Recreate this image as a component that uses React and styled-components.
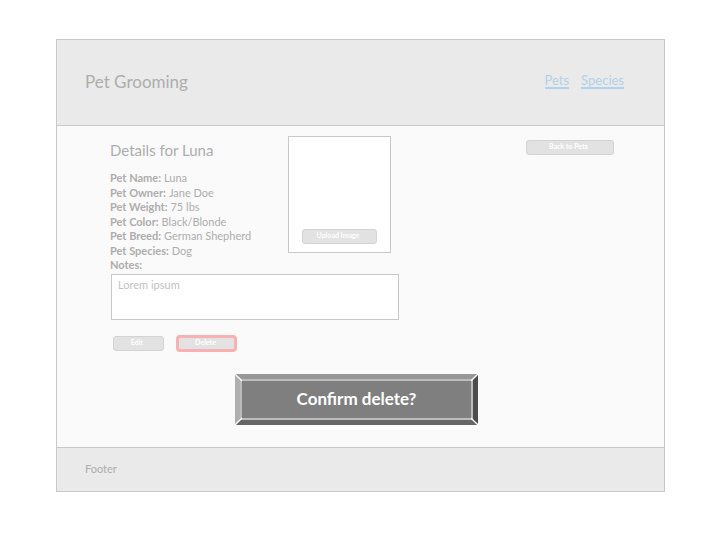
import React from "react";
import styled, { createGlobalStyle } from "styled-components";

const GlobalStyle = createGlobalStyle`
  * { box-sizing: border-box; }
  body {
    margin: 0;
    background: #ffffff;
    font-family: Lato, "Liberation Sans", sans-serif;
    color: #adadad;
  }
  h1, h2, dl, dd { margin: 0; font-weight: 400; }
`;

const Page = styled.div`
  min-height: 100vh;
  padding: 39px 55px 48px 56px;
  display: flex;
`;

const Frame = styled.div`
  flex: 1;
  display: flex;
  flex-direction: column;
  border: 1px solid #c9c9c9;
  background: #fafafa;
`;

const Header = styled.header`
  display: flex;
  align-items: center;
  justify-content: space-between;
  padding: 27px 40px 29px 28px;
  border-bottom: 1px solid #c9c9c9;
  background: #eaeaea;
`;

const Brand = styled.h1`
  font-size: 17px;
  line-height: 29px;
`;

const Nav = styled.nav`
  display: flex;
  gap: 12px;
  padding-bottom: 1px;
`;

const NavLink = styled.a`
  border-bottom: 2px solid #b3d1e8;
  color: #b3d1e8;
  font-size: 13px;
  line-height: 14px;
  text-decoration: none;
`;

const Main = styled.main`
  flex: 1;
  display: flex;
  flex-direction: column;
  padding: 10px 50px 20px 53px;
`;

const Overview = styled.div`
  display: grid;
  grid-template-columns: 178px 103px 1fr;
  align-items: start;
`;

const Title = styled.h2`
  padding-top: 4px;
  font-size: 15px;
  line-height: 20px;
`;

const Facts = styled.dl`
  display: flex;
  flex-direction: column;
  justify-content: space-between;
  height: 87px;
  margin-top: 11px;
  font-size: 11px;
  line-height: 14px;
  white-space: nowrap;
`;

const Fact = styled.div`
  display: flex;
  gap: 3px;
  dt { font-weight: 700; }
`;

const Photo = styled.div`
  display: flex;
  align-items: flex-end;
  justify-content: center;
  height: 117px;
  padding-bottom: 8px;
  border: 1px solid #c9c9c9;
  background: #ffffff;
`;

const SmallButton = styled.button`
  width: ${(p) => p.$width}px;
  height: ${(p) => (p.$danger ? 17 : 15)}px;
  padding: 0 ${(p) => (p.$danger ? 2 : 3)}px 2px 0;
  border: ${(p) => (p.$danger ? "3px solid #f9b0b3" : "1px solid #d3d3d3")};
  border-radius: ${(p) => (p.$danger ? 4 : 3)}px;
  background: #e2e2e2;
  color: #ffffff;
  font: 700 7px/9px Lato, sans-serif;
`;

const BackSlot = styled.div`
  display: flex;
  justify-content: flex-end;
  padding-top: 4px;
`;

const NotesLabel = styled.label`
  padding-bottom: 2px;
  font-size: 11px;
  font-weight: 700;
  line-height: 14px;
`;

const Notes = styled.textarea`
  display: block;
  width: 288px;
  height: 46px;
  margin-left: 1px;
  padding: 3px 6px;
  resize: none;
  border: 1px solid #c9c9c9;
  background: #ffffff;
  color: #c2c2c2;
  font: 11px/14px Lato, sans-serif;
`;

const Actions = styled.div`
  display: flex;
  align-items: center;
  gap: 12px;
  padding: 15px 3px 0;
`;

const Confirm = styled.button`
  position: relative;
  align-self: center;
  width: 243px;
  height: 51px;
  margin: 22px 11px 0 0;
  padding: 0;
  border: 5px solid;
  border-color: #979797 #4c4c4c #656565 #afafaf;
  background: #7f7f7f;
  color: #ffffff;
  font: 700 17px/20px Lato, sans-serif;
`;

const ConfirmFace = styled.span`
  display: grid;
  place-items: center;
  height: 100%;
  padding-bottom: 2px;
  border: 2px solid #bcbcbc;
`;

const Corner = styled.svg`
  position: absolute;
  ${(p) => p.$v}: -5px;
  ${(p) => p.$h}: -5px;
  width: 7px;
  height: 7px;
`;

const Footer = styled.footer`
  padding: 12px 28px 14px;
  border-top: 1px solid #c9c9c9;
  background: #eaeaea;
  font-size: 11px;
  line-height: 17px;
`;

const facts = [
  ["Pet Name:", "Luna"],
  ["Pet Owner:", "Jane Doe"],
  ["Pet Weight:", "75 lbs"],
  ["Pet Color:", "Black/Blonde"],
  ["Pet Breed:", "German Shepherd"],
  ["Pet Species:", "Dog"],
];

const corners = [
  ["top", "left", "M0 0L7 7"],
  ["top", "right", "M7 0L0 7"],
  ["bottom", "left", "M0 7L7 0"],
  ["bottom", "right", "M7 7L0 0"],
];

export default function App() {
  return (
    <Page>
      <GlobalStyle />
      <Frame>
        <Header>
          <Brand>Pet Grooming</Brand>
          <Nav>
            <NavLink href="#pets">Pets</NavLink>
            <NavLink href="#species">Species</NavLink>
          </Nav>
        </Header>
        <Main>
          <Overview>
            <div>
              <Title>Details for Luna</Title>
              <Facts>
                {facts.map(([name, value]) => (
                  <Fact key={name}>
                    <dt>{name}</dt>
                    <dd>{value}</dd>
                  </Fact>
                ))}
              </Facts>
            </div>
            <Photo>
              <SmallButton type="button" $width={75}>Upload Image</SmallButton>
            </Photo>
            <BackSlot>
              <SmallButton type="button" $width={88}>Back to Pets</SmallButton>
            </BackSlot>
          </Overview>
          <NotesLabel htmlFor="notes">Notes:</NotesLabel>
          <Notes id="notes" defaultValue="Lorem ipsum" />
          <Actions>
            <SmallButton type="button" $width={51}>Edit</SmallButton>
            <SmallButton type="button" $width={61} $danger>Delete</SmallButton>
          </Actions>
          <Confirm type="button">
            <ConfirmFace>Confirm delete?</ConfirmFace>
            {corners.map(([v, h, d]) => (
              <Corner key={d} $v={v} $h={h} viewBox="0 0 7 7" aria-hidden="true">
                <path d={d} stroke="#ffffff" strokeWidth="1.3" />
              </Corner>
            ))}
          </Confirm>
        </Main>
        <Footer>Footer</Footer>
      </Frame>
    </Page>
  );
}
